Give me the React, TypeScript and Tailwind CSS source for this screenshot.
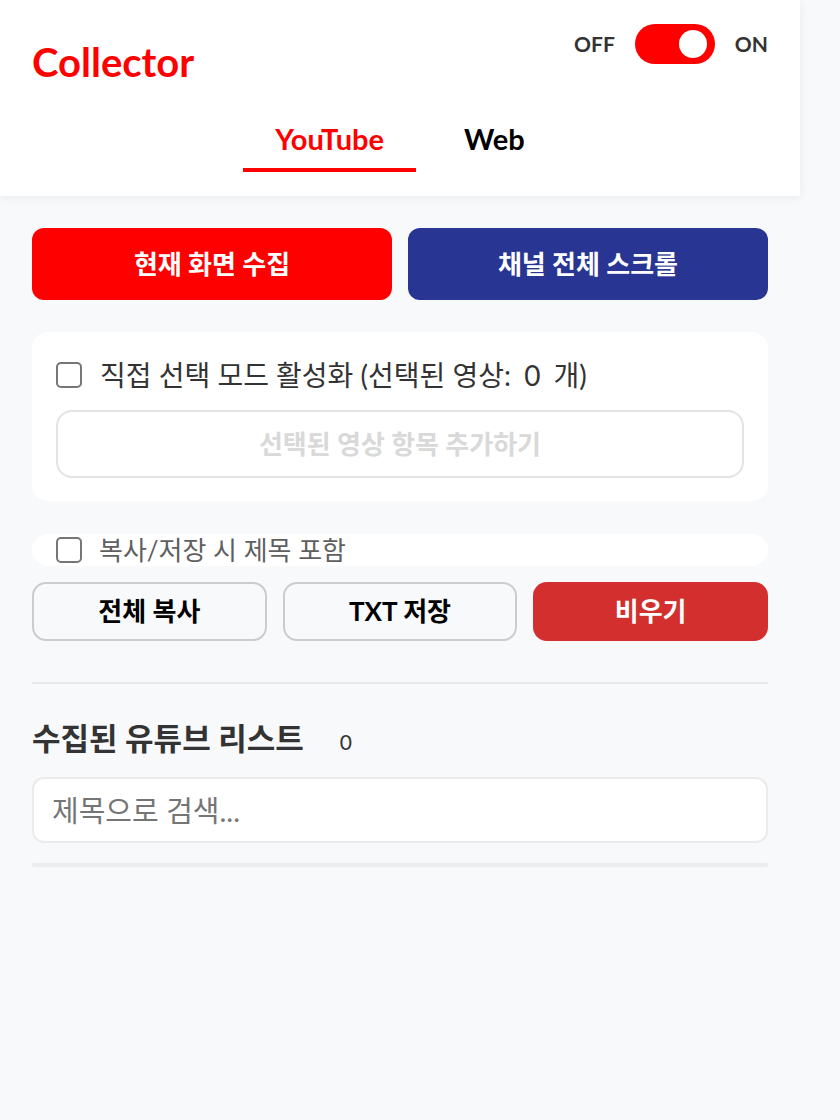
import React from "react";

const font = { fontFamily: 'Lato, "Noto Sans CJK KR", sans-serif' };

function Box({ size = 26 }: { size?: number }) {
  return (
    <span
      className="shrink-0 border-2 border-[#767676] rounded-[5px] bg-white"
      style={{ width: size, height: size }}
    />
  );
}

export default function App() {
  return (
    <div className="min-h-[1120px] bg-[#f8f9fa]" style={font}>
      <div className="w-[800px]">
        {/* HEADER */}
        <div className="bg-white px-8 pt-6 pb-6 shadow-[0_2px_10px_rgba(0,0,0,0.06)]">
          <div className="flex justify-between items-start">
            <h1 className="mt-[14px] text-[40px] leading-[48px] font-bold text-[#ff0000]">Collector</h1>
            <div className="h-10 flex items-center gap-5 text-[21px] font-bold text-[#333]">
              <span>OFF</span>
              <div className="relative w-20 h-10 rounded-full bg-[#ff0000]">
                <span className="absolute right-[8px] top-1/2 -translate-y-1/2 w-7 h-7 rounded-full bg-white" />
              </div>
              <span>ON</span>
            </div>
          </div>
          <div className="mt-[33px] flex justify-center gap-4">
            <button className="px-8 pb-[9px] leading-[40px] text-[29px] font-bold text-[#ff0000] border-b-4 border-[#ff0000]">
              YouTube
            </button>
            <button className="px-8 pb-[9px] leading-[40px] text-[29px] font-bold text-black border-b-4 border-transparent">
              Web
            </button>
          </div>
        </div>

        {/* BODY */}
        <div className="px-8 pt-8">
          <div className="grid grid-cols-2 gap-4">
            <button className="h-[72px] rounded-xl bg-[#ff0000] text-white text-[26px] font-bold">현재 화면 수집</button>
            <button className="h-[72px] rounded-xl bg-[#283593] text-white text-[26px] font-bold">채널 전체 스크롤</button>
          </div>

          <div className="mt-8 bg-white rounded-2xl p-6 pb-[23px]">
            <label className="h-[38px] flex items-center gap-[18px] text-[28px] text-[#333]">
              <Box />
              <span>
                직접 선택 모드 활성화 (선택된 영상: <span className="mx-[6px]">0</span> 개)
              </span>
            </label>
            <button
              disabled
              className="mt-4 w-full h-[68px] rounded-2xl border-2 border-[#e3e3e3] bg-white text-[26px] font-bold text-[#d9d9d9]"
            >
              선택된 영상 항목 추가하기
            </button>
          </div>

          <label className="mt-[33px] h-8 bg-white rounded-2xl px-6 flex items-center gap-[17px] text-[26px] text-[#5f5f5f]">
            <Box size={26} />
            <span>복사/저장 시 제목 포함</span>
          </label>

          <div className="mt-4 grid grid-cols-3 gap-4">
            <button className="h-[59px] rounded-[14px] border-2 border-[#cccccc] bg-[#f8f9fa] text-[26px] font-bold text-black">전체 복사</button>
            <button className="h-[59px] rounded-[14px] border-2 border-[#cccccc] bg-[#f8f9fa] text-[26px] font-bold text-black">TXT 저장</button>
            <button className="h-[59px] rounded-[14px] bg-[#d32f2f] text-[26px] font-bold text-white">비우기</button>
          </div>

          <div className="mt-[41px] h-[2px] bg-[#e9eaeb]" />

          <div className="mt-[34px] h-10 flex items-baseline">
            <h2 className="text-[31px] leading-10 font-bold text-[#333]">수집된 유튜브 리스트</h2>
            <span className="ml-9 text-[21px] text-[#333]">0</span>
          </div>

          <input
            placeholder="제목으로 검색..."
            className="mt-[19px] w-full h-[66px] rounded-xl border-2 border-[#ebebeb] bg-white px-[18px] text-[29px] text-[#333] placeholder:text-[#757575] outline-none"
          />

          <div className="mt-5 h-1 rounded-full bg-[#ececec]" />
        </div>
      </div>
    </div>
  );
}
